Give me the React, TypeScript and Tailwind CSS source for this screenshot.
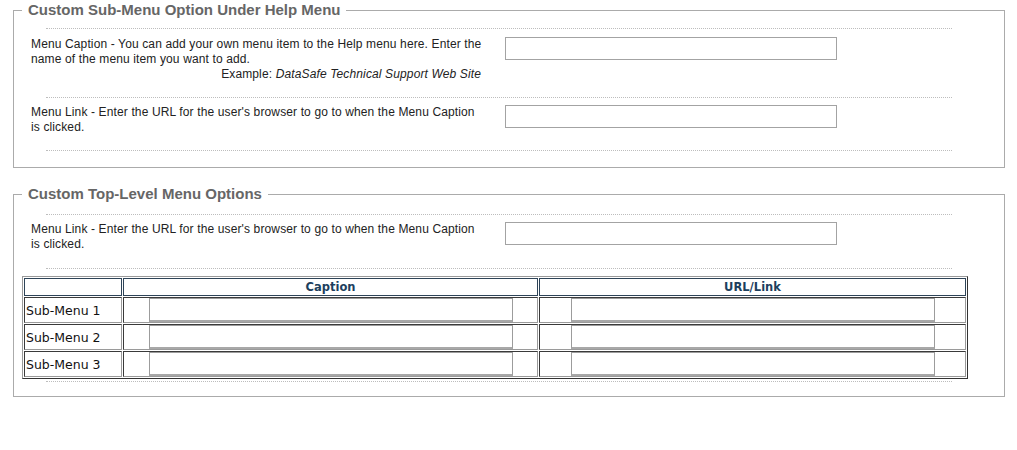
import React from "react";

function Dots({ className = "" }: { className?: string }) {
  return <div className={"ml-[24px] w-[906px] border-t border-dotted border-[#bdbdbd] " + className} />;
}

function FieldRow({
  lines,
  example,
  pt,
}: {
  lines: string;
  example?: boolean;
  pt: string;
}) {
  return (
    <div className={"flex pl-[9px] pb-[15px] " + pt}>
      <div className="w-[456px]">
        <div>{lines}</div>
        {example && (
          <div className="w-[450px] text-right">
            Example: <i>DataSafe Technical Support Web Site</i>
          </div>
        )}
      </div>
      <input
        type="text"
        className="ml-[18px] block h-[23px] w-[332px] border border-[#a3a3a3] bg-white outline-none"
      />
    </div>
  );
}

const cellCls =
  "h-[26px] border border-t-[#3a3a3a] border-l-[#3a3a3a] border-r-[#9a9a9a] border-b-[#9a9a9a] p-0 align-middle";
const inputCls =
  "mx-auto block h-[24px] w-[364px] border border-[#9c9c9c] border-b-2 border-b-[#a8a8a8] bg-white outline-none";

function SubRow({ label }: { label: string }) {
  return (
    <tr>
      <td className={cellCls + " pl-[1px] text-[12.5px] tracking-normal text-[#111]"}>{label}</td>
      <td className={cellCls}>
        <input type="text" className={inputCls} />
      </td>
      <td className={cellCls}>
        <input type="text" className={inputCls} />
      </td>
    </tr>
  );
}

export default function App() {
  const linkText =
    "Menu Link - Enter the URL for the user's browser to go to when the Menu Caption is clicked.";
  return (
    <div className="min-h-[450px] bg-white pt-[2px] font-['Liberation_Sans',Arial,sans-serif] text-[12px] leading-[15px] tracking-[0.13px] text-[#222]">
      <fieldset className="ml-[13px] mr-[12px] border border-[#ababab]">
        <legend className="ml-[8px] px-[6px] text-[15px] font-bold leading-[16px] tracking-normal text-[#666]">
          Custom Sub-Menu Option Under Help Menu
        </legend>
        <div className="pl-[8px] pt-[10px] pb-[16px]">
          <Dots />
          <FieldRow
            pt="pt-[8px]"
            example
            lines="Menu Caption - You can add your own menu item to the Help menu here. Enter the name of the menu item you want to add."
          />
          <Dots />
          <FieldRow pt="pt-[7px]" lines={linkText} />
          <Dots />
        </div>
      </fieldset>

      <fieldset className="ml-[13px] mr-[12px] mt-[18px] border border-[#ababab]">
        <legend className="ml-[8px] px-[6px] text-[15px] font-bold leading-[16px] tracking-normal text-[#666]">
          Custom Top-Level Menu Options
        </legend>
        <div className="pl-[8px] pt-[12px] pb-[14px]">
          <Dots />
          <div className="flex pl-[9px] pt-[7px] pb-[16px]">
            <div className="w-[456px]">{linkText}</div>
            <input
              type="text"
              className="ml-[18px] block h-[23px] w-[332px] border border-[#a3a3a3] bg-white outline-none"
            />
          </div>
          <Dots />
          <table className="mt-[7px] w-[946px] table-fixed border-separate border-spacing-[1px] border border-t-[#9a9a9a] border-l-[#9a9a9a] border-r-[#333] border-b-[#333] font-['DejaVu_Sans',Verdana,sans-serif] tracking-normal">
            <colgroup>
              <col className="w-[98px]" />
              <col className="w-[415px]" />
              <col className="w-[427px]" />
            </colgroup>
            <thead>
              <tr>
                <th className="h-[18px] border border-[#2e4458] p-0"></th>
                <th className="h-[18px] border border-[#2e4458] p-0 text-center text-[11.5px] font-bold leading-[16px] text-[#1d3f5e]">
                  Caption
                </th>
                <th className="h-[18px] border border-[#2e4458] p-0 text-center text-[11.5px] font-bold leading-[16px] text-[#1d3f5e]">
                  URL/Link
                </th>
              </tr>
            </thead>
            <tbody>
              <SubRow label="Sub-Menu 1" />
              <SubRow label="Sub-Menu 2" />
              <SubRow label="Sub-Menu 3" />
            </tbody>
          </table>
          <Dots className="mt-[2px]" />
        </div>
      </fieldset>
    </div>
  );
}
